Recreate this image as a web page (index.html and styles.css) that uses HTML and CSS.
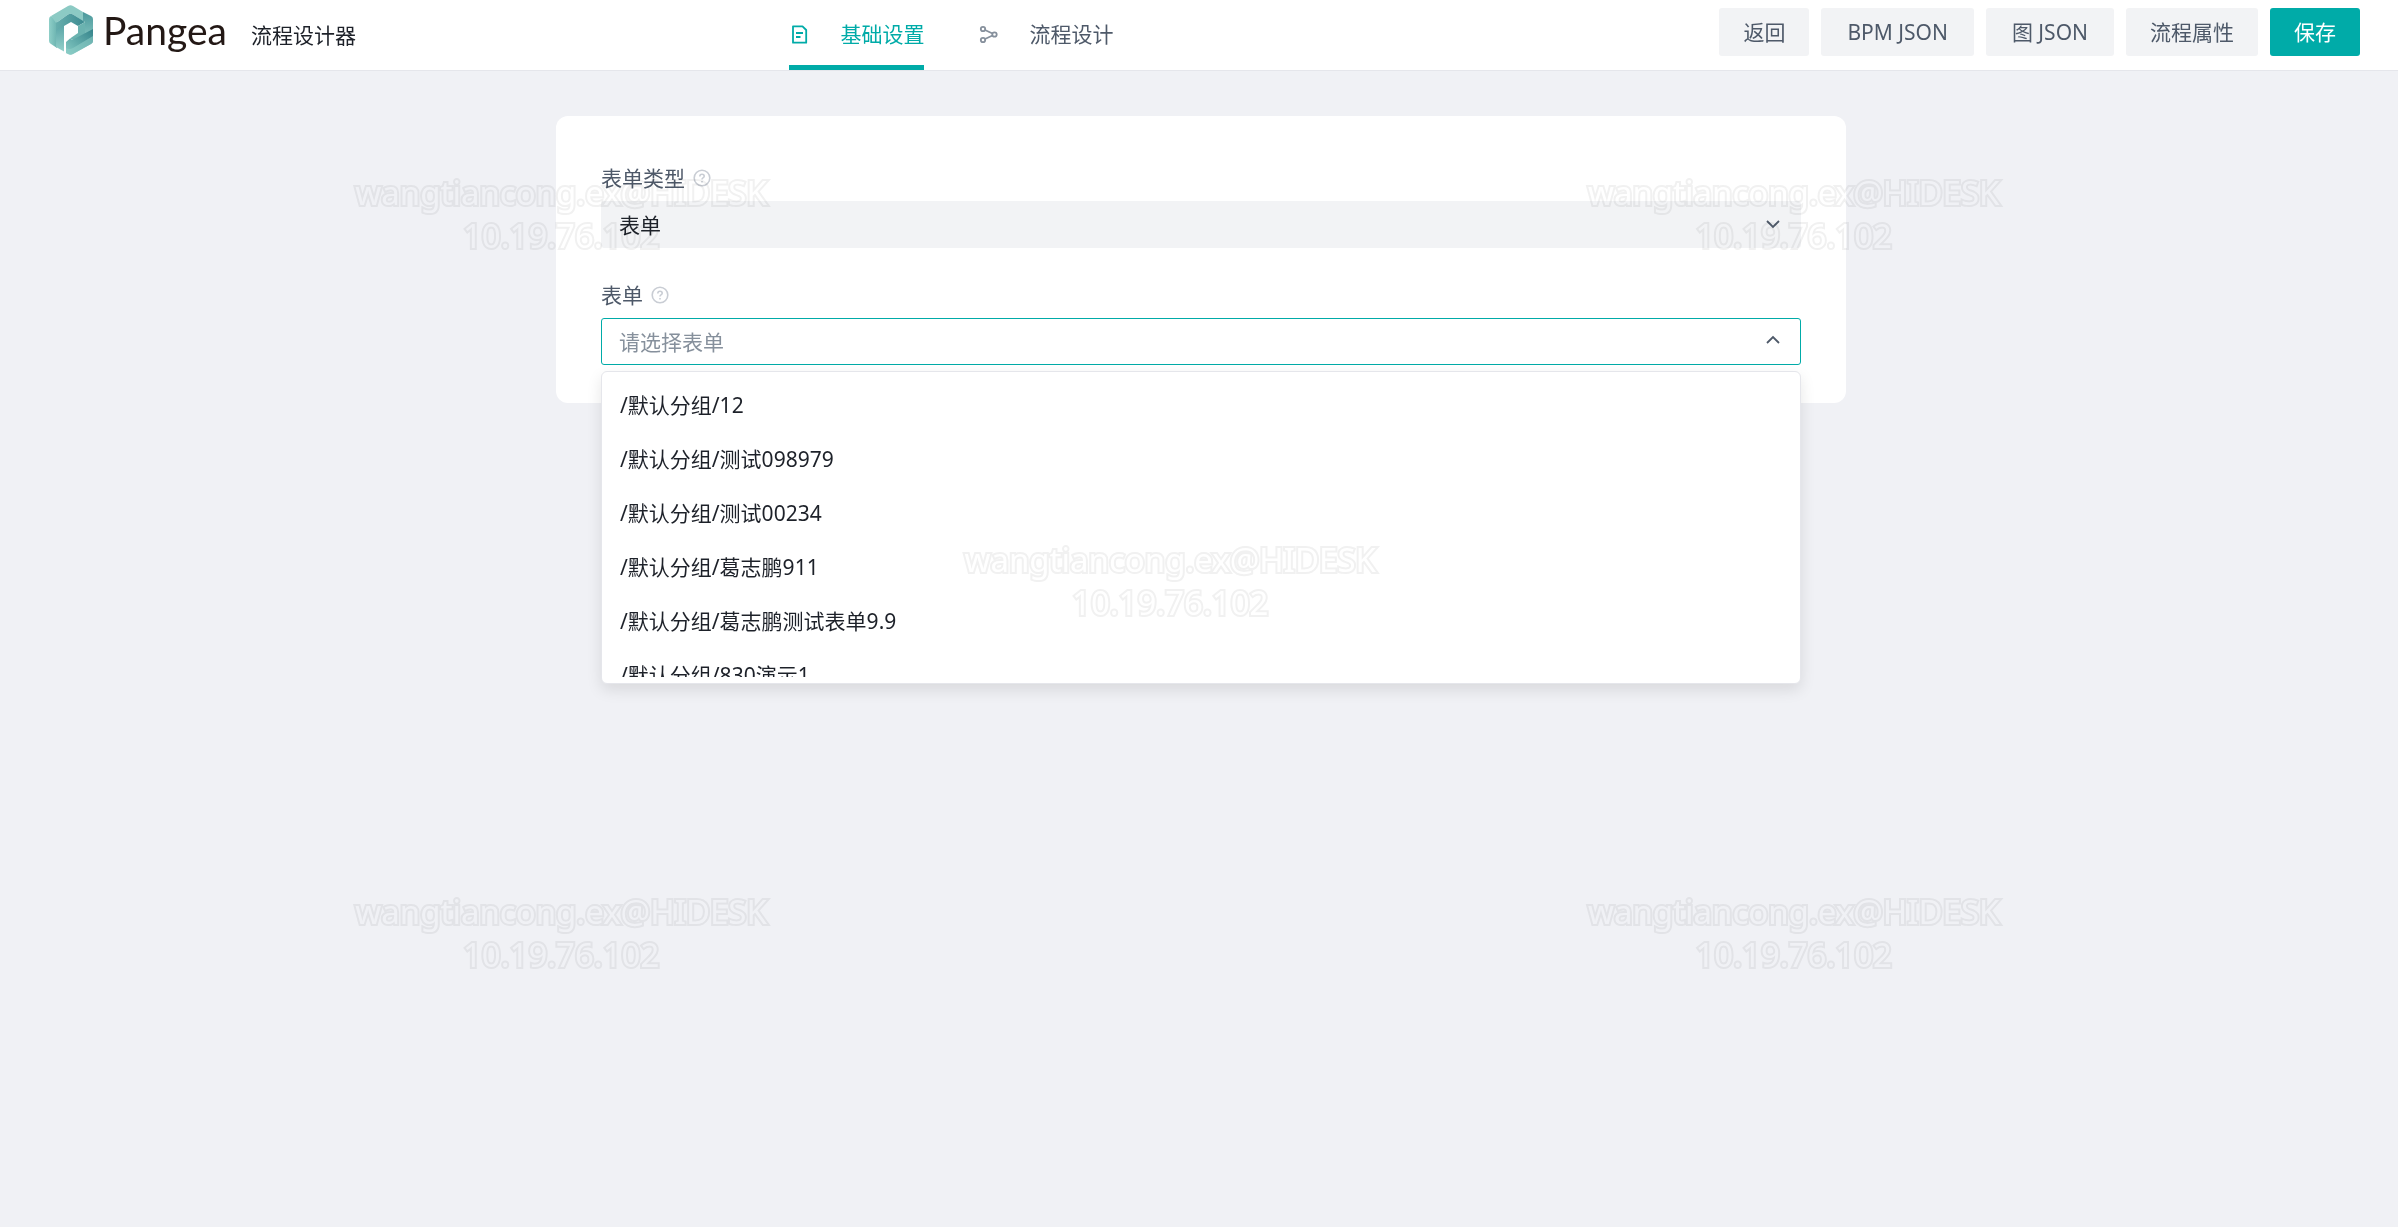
FILE: index.html
```html
<!DOCTYPE html>
<html lang="zh-CN">
<head>
<meta charset="utf-8">
<meta name="viewport" content="width=device-width, initial-scale=1">
<title>Pangea 流程设计器</title>
<link rel="stylesheet" href="styles.css">
</head>
<body>
<header class="header">
  <div class="brand">
    <svg class="brand-mark" viewBox="0 0 44 50" aria-hidden="true">
      <defs>
        <linearGradient id="g-left" x1="0" y1="0" x2="1" y2="0"><stop offset="0" stop-color="#8fcfc8"/><stop offset="1" stop-color="#6bb3b0"/></linearGradient>
        <linearGradient id="g-inner" x1="0" y1="0" x2="0" y2="1"><stop offset="0" stop-color="#4f9ca0"/><stop offset="1" stop-color="#93d0ca"/></linearGradient>
        <linearGradient id="g-fold" x1="0" y1="0" x2="1" y2="0"><stop offset="0" stop-color="#67aead"/><stop offset="1" stop-color="#3b8a90"/></linearGradient>
        <linearGradient id="g-right" x1="0" y1="0" x2="0" y2="1"><stop offset="0" stop-color="#4b989c"/><stop offset="1" stop-color="#80c2bd"/></linearGradient>
        <linearGradient id="g-bottom" x1="0" y1="1" x2="1" y2="0"><stop offset="0" stop-color="#86cbc4"/><stop offset="1" stop-color="#35848b"/></linearGradient>
      </defs>
      <path fill="url(#g-left)" d="M0 14Q0 12 2 11L8 16V43L2 39Q0 38 0 36Z"/>
      <path fill="url(#g-inner)" d="M7 18L15 15V46.500L7 42Z"/>
      <path fill="#8ccac4" d="M2 11L19 1Q21.500-.5 24 1L34 7V16L24 9.500Q21.500 8 19 9.500L7 18Z"/>
      <path fill="url(#g-fold)" d="M7 18L19 9.500Q21.500 8 24 9.500L36 17L29 21L22 17L15 21L7 25Z"/>
      <path fill="url(#g-right)" d="M34 7L42 11Q44 12 44 14V27L36 32V17L34 16Z"/>
      <path fill="#6bb3b0" d="M29 21L36 17V32L27 36L21 33.500L29 28Z"/>
      <path fill="url(#g-bottom)" d="M17 37L21 33.500Q23 35 25 34L44 24V36Q44 38 42 39L24 49Q21.500 50.500 19 49L17 48Z"/>
      <path fill="#8fd0c9" opacity=".55" d="M17 43Q20 45 24 43L44 31V36Q44 38 42 39L24 49Q21.500 50.500 19 49L17 48Z"/>
    </svg>
    <span class="brand-name">Pangea</span>
    <h1 class="brand-title">流程设计器</h1>
  </div>
  <nav class="tabs">
    <a class="tab tab-active" href="#basic" aria-current="page">
      <svg class="tab-icon" viewBox="0 0 21 21" fill="none" stroke="currentColor" stroke-width="1.8" aria-hidden="true"><path d="M4 2.300H13.500L17.200 6V18.700H4Z" stroke-linejoin="round"/><path d="M7 9H14M7 13H11.500"/></svg>
      基础设置
    </a>
    <a class="tab" href="#design">
      <svg class="tab-icon tab-icon-muted" viewBox="0 0 21 21" fill="none" stroke="currentColor" stroke-width="1.8" aria-hidden="true"><circle cx="5" cy="5" r="2.200"/><circle cx="5" cy="16" r="2.200"/><circle cx="16.500" cy="10.500" r="2.200"/><path d="M7 6L14.500 9.500M7 15L14.500 11.500"/></svg>
      流程设计
    </a>
  </nav>
  <div class="actions">
    <button class="btn" type="button">返回</button>
    <button class="btn btn-wide" type="button">BPM JSON</button>
    <button class="btn btn-wide" type="button">图 JSON</button>
    <button class="btn" type="button">流程属性</button>
    <button class="btn btn-primary" type="button">保存</button>
  </div>
</header>
<main class="main">
  <form class="card">
    <div class="field">
      <div class="field-label">
        <label for="form-type">表单类型</label>
        <svg class="help" viewBox="0 0 18 18" fill="none" stroke="currentColor" stroke-width="1.6" aria-hidden="true"><circle cx="9" cy="9" r="7.800"/><path d="M6.800 7.400Q6.800 5.300 9 5.300T11.200 7.200Q11.200 8.200 10 8.900Q9 9.500 9 10.600M9 12V13.400"/></svg>
      </div>
      <div class="control">
        <select class="input" id="form-type"><option>表单</option></select>
        <svg class="chevron" viewBox="0 0 14 14" fill="none" stroke="currentColor" stroke-width="1.8" aria-hidden="true"><path d="M1 4L7 10L13 4"/></svg>
      </div>
    </div>
    <div class="field">
      <div class="field-label">
        <label for="form-name">表单</label>
        <svg class="help" viewBox="0 0 18 18" fill="none" stroke="currentColor" stroke-width="1.6" aria-hidden="true"><circle cx="9" cy="9" r="7.800"/><path d="M6.800 7.400Q6.800 5.300 9 5.300T11.200 7.200Q11.200 8.200 10 8.900Q9 9.500 9 10.600M9 12V13.400"/></svg>
      </div>
      <div class="control">
        <input class="input input-open" id="form-name" type="text" role="combobox" aria-expanded="true" aria-controls="form-options" placeholder="请选择表单" readonly>
        <svg class="chevron" viewBox="0 0 14 14" fill="none" stroke="currentColor" stroke-width="1.8" aria-hidden="true"><path d="M1 9L7 3L13 9"/></svg>
        <div class="dropdown">
          <ul class="options" id="form-options" role="listbox">
            <li class="option" role="option">/默认分组/12</li>
            <li class="option" role="option">/默认分组/测试098979</li>
            <li class="option" role="option">/默认分组/测试00234</li>
            <li class="option" role="option">/默认分组/葛志鹏911</li>
            <li class="option" role="option">/默认分组/葛志鹏测试表单9.9</li>
            <li class="option" role="option">/默认分组/830演示1</li>
          </ul>
        </div>
      </div>
    </div>
  </form>
</main>
<div class="watermarks" aria-hidden="true">
  <p class="watermark mark-left mark-top">wangtiancong.ex@HIDESK<br>10.19.76.102</p>
  <p class="watermark mark-right mark-top">wangtiancong.ex@HIDESK<br>10.19.76.102</p>
  <p class="watermark mark-center mark-middle">wangtiancong.ex@HIDESK<br>10.19.76.102</p>
  <p class="watermark mark-left mark-bottom">wangtiancong.ex@HIDESK<br>10.19.76.102</p>
  <p class="watermark mark-right mark-bottom">wangtiancong.ex@HIDESK<br>10.19.76.102</p>
</div>
</body>
</html>
```
FILE: styles.css
```css
* {
  box-sizing: border-box;
}

body {
  position: relative;
  min-height: 100vh;
  margin: 0;
  background: #f0f1f5;
  color: #1d2129;
  font-family: "Noto Sans", "Noto Sans CJK SC", sans-serif;
  font-size: 21px;
  font-weight: 400;
  line-height: 30px;
}

button,
input,
select {
  font: inherit;
}

.header {
  display: flex;
  height: 71px;
  padding-right: 38px;
  background: #fff;
  border-bottom: 1px solid #e5e6eb;
}

.brand {
  display: flex;
  flex: 0 0 33.45%;
  align-items: center;
  padding: 0 0 10px 49px;
}

.brand-mark {
  width: 44px;
  height: 50px;
}

.brand-name {
  margin-left: 10px;
  color: #231815;
  font-family: Lato, sans-serif;
  font-size: 39px;
}

.brand-title {
  margin: 10px 0 0 24px;
  font-size: 21px;
  font-weight: 400;
}

.tabs {
  display: flex;
  gap: 54px;
}

.tab {
  display: flex;
  gap: 30px;
  align-items: center;
  border-bottom: 5px solid transparent;
  padding-top: 3px;
  color: #4e5969;
  text-decoration: none;
  white-space: nowrap;
}

.tab-active {
  border-color: #00aba8;
  color: #00aba8;
}

.tab-icon {
  width: 21px;
  height: 21px;
}

.tab-icon-muted {
  color: #86909c;
}

.actions {
  display: flex;
  gap: 12px;
  align-items: flex-start;
  margin-left: auto;
  padding-top: 8px;
}

.btn {
  height: 48px;
  padding: 0 24px;
  border: 0;
  border-radius: 3px;
  background: #f2f3f5;
  color: #4e5969;
  white-space: nowrap;
}

.btn-wide {
  padding: 0 26px;
}

.btn-primary {
  background: #00aba8;
  color: #fff;
}

.main {
  padding: 45px 24px 45px 28px;
}

.card {
  display: grid;
  gap: 30px;
  max-width: 1290px;
  margin: 0 auto;
  padding: 45px 45px 38px;
  border-radius: 12px;
  background: #fff;
}

.field {
  display: grid;
  gap: 6px;
}

.field-label {
  display: flex;
  gap: 8px;
  align-items: center;
  height: 34px;
  color: #4e5969;
}

.help {
  width: 18px;
  height: 18px;
  color: #c9cdd4;
}

.control {
  position: relative;
  color: #4e5969;
}

.input {
  display: block;
  width: 100%;
  height: 47px;
  padding: 0 48px 0 17px;
  border: 1px solid #f2f3f5;
  border-radius: 3px;
  outline: 0;
  appearance: none;
  background: #f2f3f5;
  color: #1d2129;
}

.input-open {
  border-color: #00aba8;
  background: #fff;
}

.input::placeholder {
  color: #86909c;
  opacity: 1;
}

.chevron {
  position: absolute;
  top: 16px;
  right: 21px;
  width: 14px;
  height: 14px;
}

.dropdown {
  position: absolute;
  top: 100%;
  right: 0;
  left: 0;
  margin-top: 6px;
  padding: 6px 0;
  border: 1px solid #e5e6eb;
  border-radius: 6px;
  background: #fff;
  box-shadow: 0 6px 15px rgba(0, 0, 0, 0.1);
}

.options {
  max-height: 299px;
  margin: 0;
  padding: 0;
  overflow: hidden;
  list-style: none;
}

.option {
  padding: 12px 18px;
  color: #1d2129;
}

.watermarks {
  position: absolute;
  inset: 0;
  overflow: hidden;
  mix-blend-mode: multiply;
  pointer-events: none;
}

.watermark {
  position: absolute;
  margin: 0;
  transform: translateX(-50%);
  color: #fff;
  font-size: 33px;
  line-height: 43px;
  text-align: center;
  paint-order: stroke fill;
  -webkit-text-stroke: 4px #f1f1f1;
}

.mark-left {
  left: 23.4%;
}

.mark-center {
  left: 48.8%;
}

.mark-right {
  left: 74.8%;
}

.mark-top {
  top: 171px;
}

.mark-middle {
  top: 538px;
}

.mark-bottom {
  top: 890px;
}
```
